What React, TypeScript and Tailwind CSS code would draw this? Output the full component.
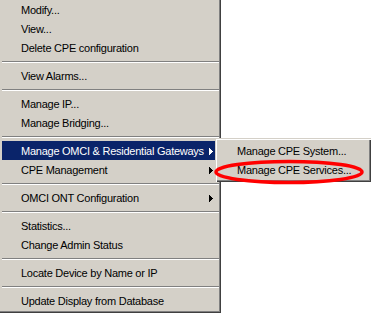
import React from 'react';

type Item = { label: string; sub?: boolean; active?: boolean } | 'sep';

const items: Item[] = [
  { label: 'Modify...' },
  { label: 'View...' },
  { label: 'Delete CPE configuration' },
  'sep',
  { label: 'View Alarms...' },
  'sep',
  { label: 'Manage IP...' },
  { label: 'Manage Bridging...' },
  'sep',
  { label: 'Manage OMCI & Residential Gateways', sub: true, active: true },
  { label: 'CPE Management', sub: true },
  'sep',
  { label: 'OMCI ONT Configuration', sub: true },
  'sep',
  { label: 'Statistics...' },
  { label: 'Change Admin Status' },
  'sep',
  { label: 'Locate Device by Name or IP' },
  'sep',
  { label: 'Update Display from Database' },
];

// classic 4x7 submenu arrow
const Arrow: React.FC<{ white?: boolean }> = ({ white }) => (
  <svg width="4" height="7" viewBox="0 0 4 7" shapeRendering="crispEdges" className="block flex-none">
    <path d="M0 0h1v7H0zM1 1h1v5H1zM2 2h1v3H2zM3 3h1v1H3z" fill={white ? '#ffffff' : '#000000'} />
  </svg>
);

export default function App() {
  return (
    <div className="relative w-[387px] h-[313px] bg-white overflow-hidden font-['Liberation_Sans',Arial,sans-serif] text-[11px] tracking-[-0.25px] leading-none text-black">
      {/* Main context menu */}
      <div className="w-[221px] h-[313px] bg-[#d4d0c8] px-[2px] shadow-[inset_-1px_-1px_0_#404040,inset_-2px_-2px_0_#808080]">
        {items.map((it, i) =>
          it === 'sep' ? (
            <div key={i} className="h-[9px] pt-[4px]">
              <div className="h-px bg-[#808080]" />
              <div className="h-px bg-white" />
            </div>
          ) : (
            <div
              key={i}
              className={`h-[19px] flex items-center pl-[19px] pr-[6px] pt-px ${it.active ? 'bg-[#0a246a] text-white' : ''}`}
            >
              <span className="flex-1 whitespace-nowrap">{it.label}</span>
              {it.sub && <Arrow white={it.active} />}
            </div>
          )
        )}
      </div>

      {/* Submenu */}
      <div className="absolute left-[215px] top-[138px] w-[156px] h-[44px] bg-[#d4d0c8] p-[3px] shadow-[inset_1px_1px_0_#d4d0c8,inset_2px_2px_0_#ffffff,inset_-1px_-1px_0_#404040,inset_-2px_-2px_0_#808080]">
        <div className="h-[19px] flex items-center pl-[19px] pt-px whitespace-nowrap">Manage CPE System...</div>
        <div className="h-[19px] flex items-center pl-[19px] pt-px whitespace-nowrap">Manage CPE Services...</div>
      </div>

      {/* Red annotation ellipse */}
      <svg className="absolute inset-0 pointer-events-none" width="387" height="313">
        <ellipse cx="289" cy="172" rx="73" ry="10.5" fill="none" stroke="#ff0000" strokeWidth="3.5" />
      </svg>
    </div>
  );
}
